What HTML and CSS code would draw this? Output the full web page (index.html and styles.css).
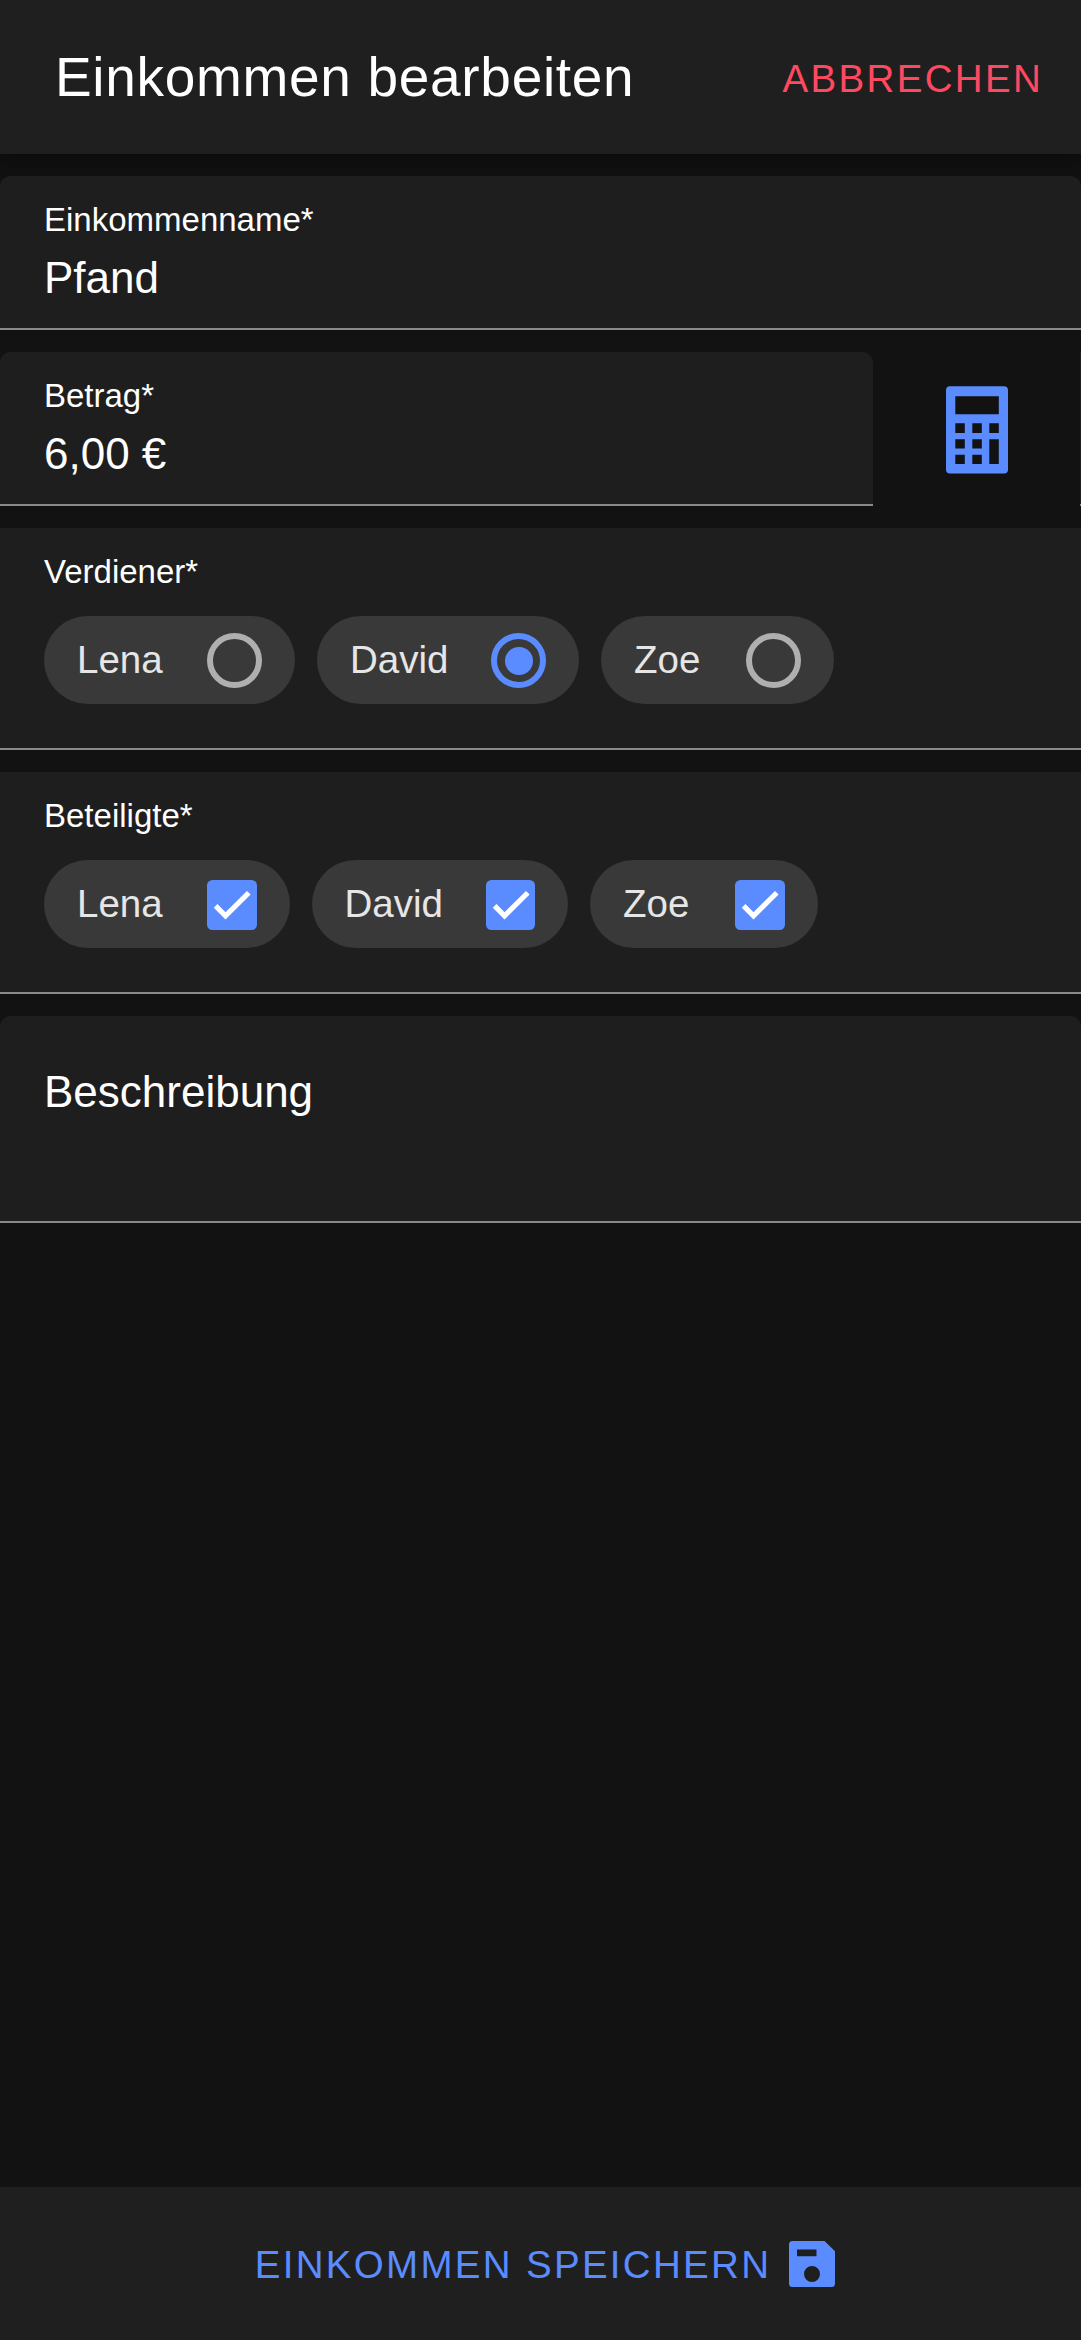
FILE: index.html
```html
<!DOCTYPE html>
<html lang="de">
<head>
<meta charset="utf-8">
<title>Einkommen bearbeiten</title>
<link rel="stylesheet" href="styles.css">
</head>
<body>
<header class="toolbar">
  <h1 class="title">Einkommen bearbeiten</h1>
  <button class="btn cancel">Abbrechen</button>
</header>
<main class="form">
  <section class="item rounded">
    <div class="label">Einkommenname*</div>
    <div class="value">Pfand</div>
  </section>
  <div class="amount-row">
    <section class="item rounded">
      <div class="label">Betrag*</div>
      <div class="value">6,00 €</div>
    </section>
    <button class="calc" aria-label="Rechner">
      <svg width="62" height="88" viewBox="0 0 62 88"><path fill="currentColor" fill-rule="evenodd" d="M4 .3H58a4 4 0 0 1 4 4V83.500a4 4 0 0 1-4 4H4a4 4 0 0 1-4-4V4.300a4 4 0 0 1 4-4ZM9.300 10.200V28.300H52.800V10.200ZM9.300 37.300V47H18.800V37.300ZM26.300 37.300V47H35.800V37.300ZM43.300 37.300V47H52.800V37.300ZM9.300 53.300V62.500H18.800V53.300ZM26.300 53.300V62.500H35.800V53.300ZM43.300 53.300V78H52.800V53.300ZM9.300 68.800V78H18.800V68.800ZM26.300 68.800V78H35.800V68.800Z"/></svg>
    </button>
    <section class="item rounded edge"></section>
  </div>
  <section class="item group">
    <div class="label">Verdiener*</div>
    <div class="chips">
      <div class="chip">Lena<span class="radio"></span></div>
      <div class="chip">David<span class="radio on"></span></div>
      <div class="chip">Zoe<span class="radio"></span></div>
    </div>
  </section>
  <section class="item group">
    <div class="label">Beteiligte*</div>
    <div class="chips checks">
      <div class="chip">Lena<span class="check"><svg viewBox="0 0 50 50"><path d="M8.700 26.200 18.700 36.200 42.200 12.900"/></svg></span></div>
      <div class="chip">David<span class="check"><svg viewBox="0 0 50 50"><path d="M8.700 26.200 18.700 36.200 42.200 12.900"/></svg></span></div>
      <div class="chip">Zoe<span class="check"><svg viewBox="0 0 50 50"><path d="M8.700 26.200 18.700 36.200 42.200 12.900"/></svg></span></div>
    </div>
  </section>
  <section class="item rounded description">
    <div class="value">Beschreibung</div>
  </section>
</main>
<footer class="footer">
  <button class="btn save">Einkommen speichern
    <svg width="46" height="46" viewBox="0 0 46 46"><path fill="currentColor" fill-rule="evenodd" d="M3.500 0H35.500L46 10.300V42.500a3.500 3.500 0 0 1-3.500 3.500H3.500A3.500 3.500 0 0 1 0 42.500V3.500A3.500 3.500 0 0 1 3.500 0ZM8 8.500V15.200H27.500V8.500ZM23 25a8 8 0 1 0 0 16a8 8 0 1 0 0-16Z"/></svg>
  </button>
</footer>
</body>
</html>
```
FILE: styles.css
```css
* { box-sizing: border-box; }

body {
  margin: 0;
  height: 2340px;
  display: flex;
  flex-direction: column;
  overflow: hidden;
  background: #121212;
  color: #fff;
  font-family: "Liberation Sans", Arial, sans-serif;
}

button {
  border: 0;
  padding: 0;
  background: none;
  font-family: inherit;
}

.toolbar {
  height: 154px;
  flex: none;
  display: flex;
  align-items: center;
  justify-content: space-between;
  padding: 3px 38px 0 55px;
  background: #1f1f1f;
  box-shadow: 0 5.5px 11px -2.75px rgba(0, 0, 0, .2), 0 11px 13.75px rgba(0, 0, 0, .14), 0 2.75px 27.5px rgba(0, 0, 0, .12);
}

.title {
  margin: 0 0 3px;
  font-size: 55px;
  font-weight: 400;
  letter-spacing: .6875px;
}

.btn {
  font-size: 38.5px;
  letter-spacing: 2.31px;
  text-transform: uppercase;
}

.cancel { color: #ff4961; }

.form {
  flex: 1;
  display: flex;
  flex-direction: column;
  gap: 22px;
  padding-top: 22px;
}

.item {
  height: 154px;
  padding: 25px 44px 0;
  background: #1e1e1e;
  border-bottom: 2px solid #898989;
}

.rounded {
  border-bottom: 0;
  background: linear-gradient(#898989, #898989) bottom / 100% 2px no-repeat #1e1e1e;
  border-radius: 11px 11px 0 0;
}

.label {
  font-size: 33px;
  line-height: 38px;
}

.value {
  margin-top: 14px;
  font-size: 44px;
  line-height: 50px;
}

.amount-row {
  display: grid;
  grid-template-columns: 873px 207px 1px;
}

.edge { padding: 0; border-radius: 0; }

.calc {
  display: flex;
  align-items: center;
  justify-content: center;
  padding-top: 1px;
  color: #5a8cff;
}

.group { height: 222px; }

.chips {
  display: grid;
  grid-template-columns: 251px 262px 233px;
  gap: 22px;
  margin-top: 25px;
}

.checks { grid-template-columns: 245.5px 256.5px 227.5px; }

.chip {
  height: 88px;
  display: flex;
  align-items: center;
  justify-content: space-between;
  padding: 0 33px;
  border-radius: 44px;
  background: #393939;
  color: #e6e6e6;
  font-size: 38.5px;
}

.radio {
  width: 55px;
  height: 55px;
  display: grid;
  place-items: center;
  border: 5.5px solid #afafaf;
  border-width: 6px;
  border-radius: 50%;
}

.radio.on { border-color: #5a8cff; }

.radio.on::after {
  content: "";
  width: 28px;
  height: 28px;
  margin: 2px 0 0 1px;
  border-radius: 50%;
  background: #5a8cff;
}

.check {
  width: 49.5px;
  height: 49.5px;
  margin-top: 2px;
  border-radius: 5.5px;
  background: #5a8cff;
}

.check svg { display: block; }

.check path {
  fill: none;
  stroke: #fff;
  stroke-width: 5.200px;
}

.description {
  height: 207px;
  padding-top: 37px;
}

.footer {
  height: 153px;
  flex: none;
  display: flex;
  align-items: center;
  justify-content: center;
  padding: 3px 0 0 9px;
  background: #1f1f1f;
}

.save {
  display: flex;
  align-items: center;
  gap: 18px;
  color: #5a8cff;
}

.save svg { margin-bottom: 2px; }
```
